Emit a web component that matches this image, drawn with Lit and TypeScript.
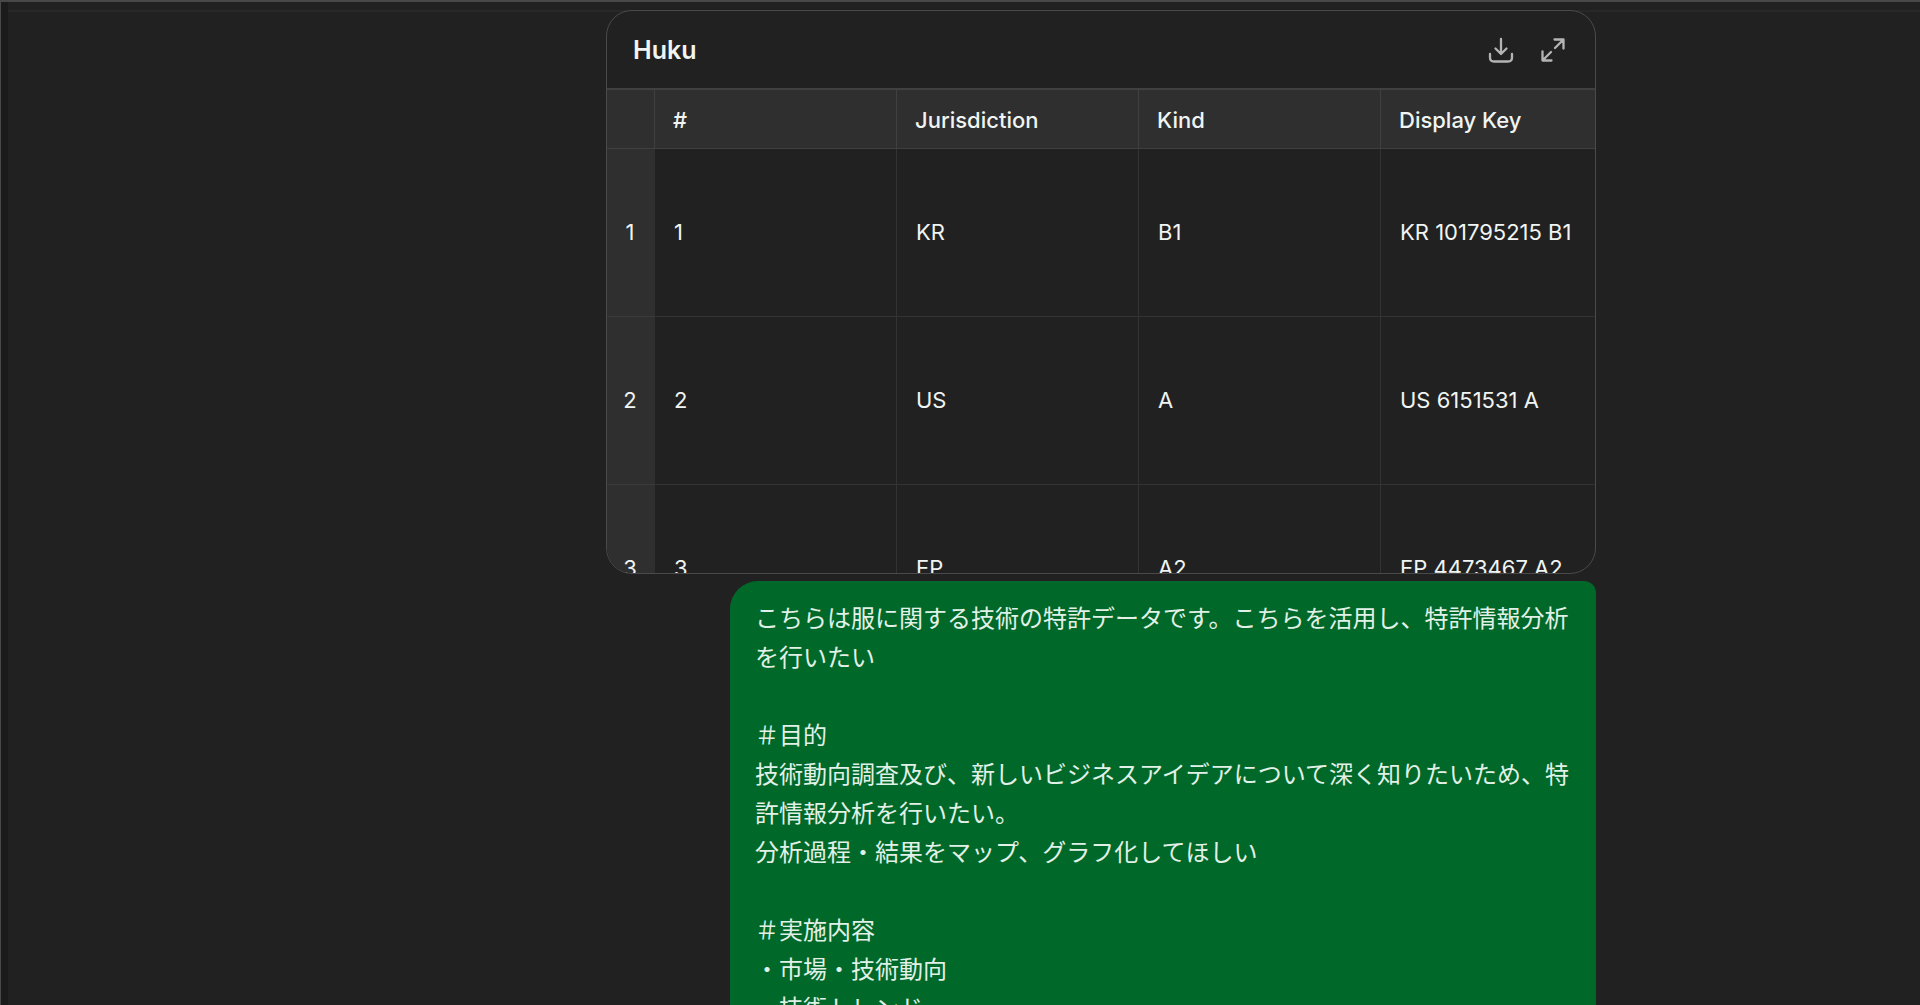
import { LitElement, html, css } from "lit";
import { customElement, property } from "lit/decorators.js";

interface Patent {
  no: number;
  jurisdiction: string;
  kind: string;
  displayKey: string;
}

const patents: Patent[] = [
  { no: 1, jurisdiction: "KR", kind: "B1", displayKey: "KR 101795215 B1" },
  { no: 2, jurisdiction: "US", kind: "A", displayKey: "US 6151531 A" },
  { no: 3, jurisdiction: "EP", kind: "A2", displayKey: "EP 4473467 A2" },
];

const message = [
  "こちらは服に関する技術の特許データです。こちらを活用し、特許情報分析を行いたい",
  "",
  "＃目的",
  "技術動向調査及び、新しいビジネスアイデアについて深く知りたいため、特許情報分析を行いたい。",
  "分析過程・結果をマップ、グラフ化してほしい",
  "",
  "＃実施内容",
  "・市場・技術動向",
  "・技術トレンド",
].join("\n");

@customElement("data-card")
export class DataCard extends LitElement {
  @property() heading = "";
  @property({ attribute: false }) rows: Patent[] = [];

  static styles = css`
    :host {
      display: flex;
      flex-direction: column;
      box-sizing: border-box;
      height: 564px;
      overflow: hidden;
      border: 1px solid #4a4a4a;
      border-radius: 26px;
      background: #212121;
      color: #f0f4f2;
    }
    .bar {
      display: flex;
      align-items: center;
      justify-content: space-between;
      flex: none;
      box-sizing: border-box;
      height: 79px;
      padding: 1px 22px 0 26px;
      border-bottom: 2px solid #404040;
    }
    .title {
      margin: 0;
      font-size: 25px;
      font-weight: 600;
      line-height: 32px;
    }
    .actions {
      display: flex;
      gap: 12px;
    }
    .action {
      display: grid;
      place-items: center;
      width: 40px;
      height: 40px;
      padding: 0;
      border: 0;
      background: none;
      color: #b4b4b4;
      cursor: pointer;
    }
    .icon {
      width: 26px;
      height: 26px;
      fill: none;
      stroke: currentColor;
      stroke-width: 2.3;
      stroke-linecap: round;
      stroke-linejoin: round;
    }
    .viewport {
      flex: 1;
      min-height: 0;
      overflow: hidden;
    }
    .grid {
      width: 1016px;
      table-layout: fixed;
      border-collapse: separate;
      border-spacing: 0;
      font-size: 22px;
      line-height: 28px;
      text-align: left;
      white-space: nowrap;
    }
    .index-col {
      width: 48px;
    }
    .col {
      box-sizing: border-box;
      height: 59px;
      padding: 1px 18px 0;
      background: #2f2f2f;
      border-right: 1px solid #404040;
      border-bottom: 1px solid #404040;
      font-weight: 500;
    }
    .cell {
      box-sizing: border-box;
      height: 168px;
      padding: 0 18px 2px 19px;
      border-right: 1px solid #333333;
      border-bottom: 1px solid #333333;
    }
    .index {
      box-sizing: border-box;
      padding: 0 2px 2px 0;
      background: #2f2f2f;
      border-bottom: 1px solid #3a3a3a;
      font-weight: 400;
      text-align: center;
    }
  `;

  render() {
    return html`
      <header class="bar">
        <h2 class="title">${this.heading}</h2>
        <div class="actions">
          <button class="action" type="button" aria-label="Download">
            <svg class="icon" viewBox="0 0 26 26" aria-hidden="true">
              <path d="M13 2v14.500M7.500 11.500l5.500 5.500 5.500-5.500" />
              <path d="M2 17v3.500q0 4 4 4h14q4 0 4-4V17" />
            </svg>
          </button>
          <button class="action" type="button" aria-label="Expand">
            <svg class="icon" viewBox="0 0 26 26" aria-hidden="true">
              <path d="M14.500 2.500H23.500V11.500M23.500 2.500L15 11" />
              <path d="M2.500 14.500V23.500H11.500M2.500 23.500L11 15" />
            </svg>
          </button>
        </div>
      </header>
      <div class="viewport">
        <table class="grid">
          <colgroup>
            <col class="index-col" />
            <col /><col /><col /><col />
          </colgroup>
          <thead>
            <tr>
              <td class="col"></td>
              <th class="col" scope="col">#</th>
              <th class="col" scope="col">Jurisdiction</th>
              <th class="col" scope="col">Kind</th>
              <th class="col" scope="col">Display Key</th>
            </tr>
          </thead>
          <tbody>
            ${this.rows.map(
              (row, i) => html`
                <tr>
                  <th class="index" scope="row">${i + 1}</th>
                  <td class="cell">${row.no}</td>
                  <td class="cell">${row.jurisdiction}</td>
                  <td class="cell">${row.kind}</td>
                  <td class="cell">${row.displayKey}</td>
                </tr>
              `
            )}
          </tbody>
        </table>
      </div>
    `;
  }
}

@customElement("user-message")
export class UserMessage extends LitElement {
  @property() text = "";

  static styles = css`
    :host {
      display: block;
      box-sizing: border-box;
      padding: 16px 25px;
      border-radius: 28px 12px 28px 28px;
      background: #00692a;
      color: #e2f1e7;
    }
    .text {
      margin: 0;
      font-family: "Noto Sans CJK JP", sans-serif;
      font-size: 24px;
      line-height: 39px;
      white-space: pre-wrap;
    }
  `;

  render() {
    return html`<p class="text" lang="ja">${this.text}</p>`;
  }
}

@customElement("app-root")
export class AppRoot extends LitElement {
  static styles = css`
    :host {
      display: block;
      font-family: Inter, "Liberation Sans", sans-serif;
    }
    .window {
      display: flex;
      flex-direction: column;
      box-sizing: border-box;
      height: 100vh;
      overflow: hidden;
      border-top: 2px solid #484848;
      background: #212121;
    }
    .body {
      display: flex;
      flex: 1;
      min-height: 0;
    }
    .rail {
      flex: none;
      box-sizing: border-box;
      width: 8px;
      border-left: 1px solid #484848;
      background: #1b1b1b;
    }
    .pane {
      display: grid;
      flex: 1;
      grid-template-columns: minmax(0, 598fr) minmax(0, 990px) minmax(0, 324fr);
      align-content: start;
      min-width: 0;
      margin-top: 8px;
      border-top: 2px solid #282828;
    }
    .thread {
      display: flex;
      flex-direction: column;
      grid-column: 2;
      gap: 7px;
      margin-top: -2px;
    }
    .mine {
      align-self: flex-end;
      max-width: 866px;
    }
  `;

  render() {
    return html`
      <main class="window">
        <div class="body">
          <div class="rail"></div>
          <div class="pane">
            <section class="thread">
              <data-card heading="Huku" .rows=${patents}></data-card>
              <user-message class="mine" .text=${message}></user-message>
            </section>
          </div>
        </div>
      </main>
    `;
  }
}
